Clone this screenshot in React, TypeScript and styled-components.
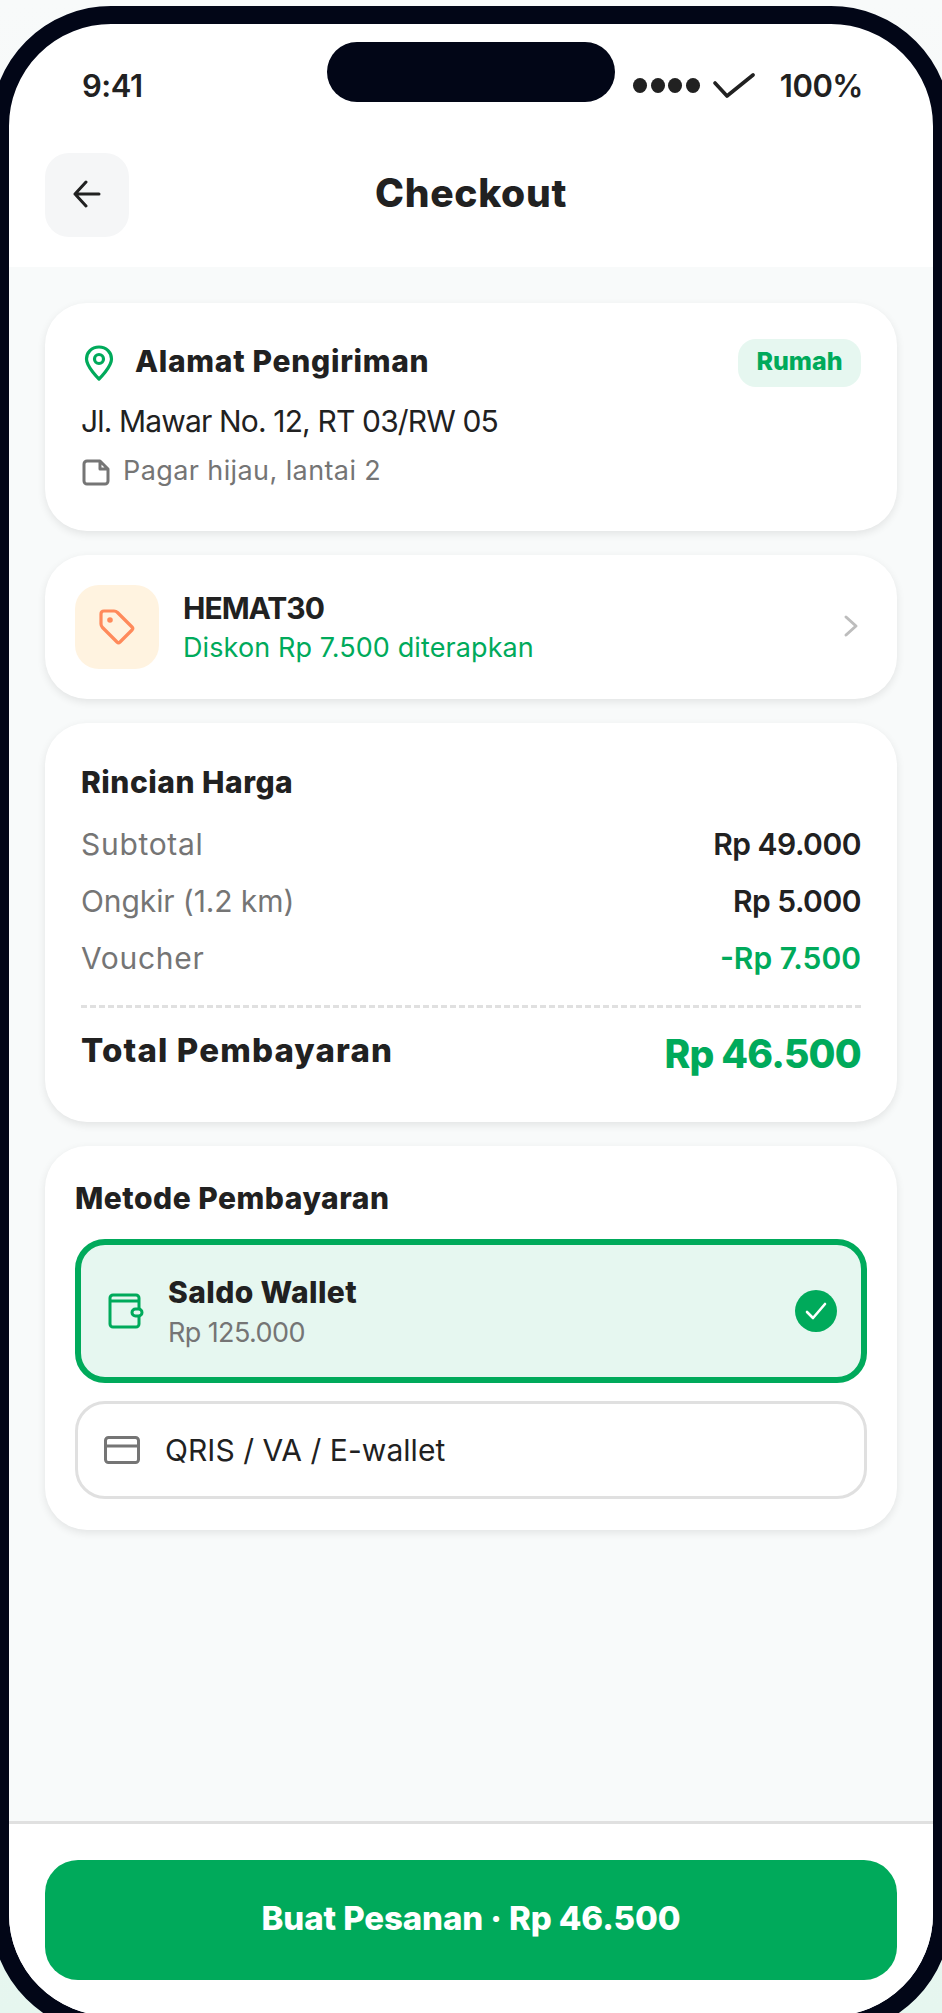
import React from 'react'
import styled, { createGlobalStyle } from 'styled-components'

const GlobalStyle = createGlobalStyle`
    html, body {
        margin: 0;
        height: 2013px;
        overflow: hidden;
        background: linear-gradient(180deg, #f8fafa 0%, #e6f6ef 100%);
    }
    * { box-sizing: border-box; }
`

const green = '#00aa5b'
const tint = '#e6f7f0'
const ink = '#212121'
const grey = '#757575'
const line = '#e0e0e0'

const Phone = styled.div`
    width: 960px;
    height: 2028px;
    margin: 6px 0 0 -9px;
    border: 18px solid #020617;
    border-radius: 120px;
    background: #fff;
    overflow: hidden;
    display: flex;
    flex-direction: column;
    position: relative;
    font-family: Inter, "Liberation Sans", sans-serif;
    color: ${ink};
`

const Island = styled.div`
    position: absolute;
    top: 18px;
    left: 318px;
    width: 288px;
    height: 60px;
    border-radius: 30px;
    background: #020617;
`

const StatusBar = styled.div`
    height: 99px;
    padding: 24px 70px 0 73px;
    display: flex;
    align-items: center;
    justify-content: space-between;
    font-size: 31px;
    font-weight: 600;
    letter-spacing: -0.5px;
`

const StatusRight = styled.div`
    display: flex;
    align-items: center;
`

const Dots = styled.div`
    display: flex;
    gap: 3.5px;
    margin-right: 13px;
`

const Dot = styled.span`
    width: 14px;
    height: 15px;
    border-radius: 50%;
    background: ${ink};
`

const Battery = styled.span`
    margin-left: 25px;
`

const Header = styled.header`
    height: 144px;
    padding: 30px 36px;
    display: grid;
    grid-template-columns: 84px 1fr 84px;
    align-items: center;
`

const BackButton = styled.button`
    width: 84px;
    height: 84px;
    border: 0;
    padding: 0 0 2px;
    border-radius: 24px;
    background: #f5f6f7;
    display: flex;
    align-items: center;
    justify-content: center;
`

const Title = styled.h1`
    margin: 0 0 5px;
    text-align: center;
    font-size: 39px;
    font-weight: 800;
    letter-spacing: 0.7px;
`

const Main = styled.main`
    flex: 1;
    background: #f8fafa;
    padding: 36px 36px 0;
    display: flex;
    flex-direction: column;
    gap: 24px;
`

const Card = styled.section<{ $pad: number }>`
    background: #fff;
    border-radius: 42px;
    padding: ${p => p.$pad}px;
    box-shadow: 0 3px 9px rgba(0, 0, 0, 0.09);
`

const AddressCard = styled(Card)`
    height: 228px;
    padding-top: 36px;
`

const AddressTop = styled.div`
    display: flex;
    align-items: center;
    height: 48px;
`

const CardTitle = styled.h2`
    margin: 0;
    font-size: 30px;
    font-weight: 800;
    letter-spacing: 0.5px;
`

const AddressTitle = styled(CardTitle)`
    flex: 1;
    margin: 0 0 5px 18px;
    letter-spacing: 0.7px;
`

const Badge = styled.span`
    width: 123px;
    height: 48px;
    padding-bottom: 4px;
    border-radius: 18px;
    background: ${tint};
    color: ${green};
    font-size: 25px;
    font-weight: 800;
    display: flex;
    align-items: center;
    justify-content: center;
`

const AddressLine = styled.div`
    margin-top: 13px;
    font-size: 30px;
    line-height: 42px;
    letter-spacing: -0.85px;
`

const NoteLine = styled.div`
    margin-top: 9px;
    display: flex;
    align-items: center;
    gap: 13px;
    font-size: 27px;
    line-height: 39px;
    letter-spacing: 0.4px;
    color: ${grey};
`

const NoteIcon = styled.svg`
    margin: 4px 0 0 1px;
`

const VoucherCard = styled(Card)`
    height: 144px;
    display: flex;
    align-items: center;
    gap: 24px;
`

const IconTile = styled.div`
    width: 84px;
    height: 84px;
    border-radius: 24px;
    background: #fff3e0;
    display: flex;
    align-items: center;
    justify-content: center;
`

const VoucherText = styled.div`
    flex: 1;
`

const VoucherCode = styled.div`
    font-size: 30px;
    line-height: 40px;
    font-weight: 700;
    letter-spacing: -1px;
`

const VoucherNote = styled.div`
    font-size: 27px;
    line-height: 39px;
    color: ${green};
    letter-spacing: 0.1px;
`

const Chevron = styled.svg`
    margin: 0 7px 2px 0;
`

const PriceCard = styled(Card)`
    height: 399px;
    padding-top: 41px;
`

const PriceRow = styled.div`
    display: flex;
    justify-content: space-between;
    align-items: center;
    height: 57px;
`

const PriceList = styled.div`
    margin-top: 15px;
`

const PriceLabel = styled.span<{ $spacing: number }>`
    font-size: 30px;
    color: ${grey};
    letter-spacing: ${p => p.$spacing}px;
`

const PriceValue = styled.span<{ $green?: boolean }>`
    font-size: 30px;
    font-weight: 600;
    letter-spacing: ${p => (p.$green ? 0 : -0.5)}px;
    color: ${p => (p.$green ? green : ink)};
`

const Divider = styled.div`
    margin-top: 19px;
    border-top: 3px dashed ${line};
`

const TotalRow = styled.div`
    margin-top: 18px;
    display: flex;
    justify-content: space-between;
    align-items: flex-start;
`

const TotalLabel = styled.span`
    font-size: 33px;
    line-height: 48px;
    font-weight: 800;
    letter-spacing: 1.15px;
`

const TotalValue = styled.span`
    font-size: 39px;
    line-height: 56px;
    font-weight: 800;
    letter-spacing: -0.8px;
    color: ${green};
`

const PaymentCard = styled(Card)`
    height: 384px;
`

const PaymentTitle = styled(CardTitle)`
    line-height: 44px;
    margin-bottom: 19px;
`

const SelectedOption = styled.div`
    height: 144px;
    border: 6px solid ${green};
    border-radius: 30px;
    background: ${tint};
    padding: 0 24px 0 27px;
    display: flex;
    align-items: center;
    gap: 24px;
`

const OptionText = styled.div`
    flex: 1;
`

const OptionName = styled.div`
    font-size: 30px;
    line-height: 42px;
    font-weight: 800;
    letter-spacing: 0.4px;
`

const OptionNote = styled.div`
    font-size: 27px;
    line-height: 39px;
    letter-spacing: -0.6px;
    color: ${grey};
`

const CheckCircle = styled.div`
    width: 42px;
    height: 42px;
    border-radius: 50%;
    background: ${green};
    display: flex;
    align-items: center;
    justify-content: center;
`

const PlainOption = styled.div`
    margin-top: 18px;
    height: 98px;
    border: 3px solid ${line};
    border-radius: 30px;
    padding: 0 26px;
    display: flex;
    align-items: center;
    gap: 25px;
    font-size: 30px;
    letter-spacing: 0.05px;
`

const Footer = styled.footer`
    border-top: 3px solid ${line};
    padding: 36px;
    background: #fff;
`

const PayButton = styled.button`
    width: 100%;
    height: 120px;
    border: 0;
    padding: 0 0 5px;
    border-radius: 33px;
    background: ${green};
    color: #fff;
    font-family: inherit;
    font-size: 33px;
    font-weight: 800;
    letter-spacing: -0.1px;
`

export default function App() {
    return <>
        <GlobalStyle />
        <Phone>
            <Island />
            <StatusBar>
                <span>9:41</span>
                <StatusRight>
                    <Dots><Dot /><Dot /><Dot /><Dot /></Dots>
                    <svg width="42" height="27" viewBox="0 0 42 27" fill="none" stroke={ink} strokeWidth="3.6" strokeLinecap="round" strokeLinejoin="round">
                        <path d="M2 11 L14 24 L40 3" />
                    </svg>
                    <Battery>100%</Battery>
                </StatusRight>
            </StatusBar>
            <Header>
                <BackButton>
                    <svg width="30" height="28" viewBox="0 0 30 28" fill="none" stroke={ink} strokeWidth="3" strokeLinecap="round" strokeLinejoin="round">
                        <path d="M27 14 H3 M14 2 L3 14 L14 26" />
                    </svg>
                </BackButton>
                <Title>Checkout</Title>
            </Header>
            <Main>
                <AddressCard $pad={36}>
                    <AddressTop>
                        <svg width="36" height="36" viewBox="0 0 36 36" fill="none" stroke={green} strokeWidth="3.2" strokeLinejoin="round">
                            <path d="M18 2 C10.5 2 5.5 7.5 5.5 14 C5.5 22 18 34 18 34 C18 34 30.5 22 30.5 14 C30.5 7.5 25.5 2 18 2 Z" />
                            <circle cx="18" cy="14" r="4.5" />
                        </svg>
                        <AddressTitle>Alamat Pengiriman</AddressTitle>
                        <Badge>Rumah</Badge>
                    </AddressTop>
                    <AddressLine>Jl. Mawar No. 12, RT 03/RW 05</AddressLine>
                    <NoteLine>
                        <NoteIcon width="28" height="27" viewBox="0 0 28 27" fill="none" stroke={grey} strokeWidth="3" strokeLinejoin="round">
                            <path d="M5 2 H18 L26 10 V22 A3 3 0 0 1 23 25 H5 A3 3 0 0 1 2 22 V5 A3 3 0 0 1 5 2 Z M18 2 V10 H26" />
                        </NoteIcon>
                        <span>Pagar hijau, lantai 2</span>
                    </NoteLine>
                </AddressCard>
                <VoucherCard $pad={30}>
                    <IconTile>
                        <svg width="36" height="36" viewBox="0 0 36 36" fill="none" stroke="#ff8a5b" strokeWidth="3.2" strokeLinejoin="round">
                            <path d="M5 2 H15 Q17 2 18.5 3.5 L33 18 Q34.5 19.5 33 21 L21 33 Q19.5 34.5 18 33 L3.5 18.5 Q2 17 2 15 V5 Q2 2 5 2 Z" />
                            <circle cx="11" cy="11" r="1.2" fill="#ff8a5b" />
                        </svg>
                    </IconTile>
                    <VoucherText>
                        <VoucherCode>HEMAT30</VoucherCode>
                        <VoucherNote>Diskon Rp 7.500 diterapkan</VoucherNote>
                    </VoucherText>
                    <Chevron width="18" height="24" viewBox="0 0 18 24" fill="none" stroke="#bdbdbd" strokeWidth="3" strokeLinecap="round" strokeLinejoin="round">
                        <path d="M4 3 L14 12 L4 21" />
                    </Chevron>
                </VoucherCard>
                <PriceCard $pad={36}>
                    <CardTitle>Rincian Harga</CardTitle>
                    <PriceList>
                        <PriceRow><PriceLabel $spacing={0.7}>Subtotal</PriceLabel><PriceValue>Rp 49.000</PriceValue></PriceRow>
                        <PriceRow><PriceLabel $spacing={-0.1}>Ongkir (1.2 km)</PriceLabel><PriceValue>Rp 5.000</PriceValue></PriceRow>
                        <PriceRow><PriceLabel $spacing={0.7}>Voucher</PriceLabel><PriceValue $green>-Rp 7.500</PriceValue></PriceRow>
                    </PriceList>
                    <Divider />
                    <TotalRow>
                        <TotalLabel>Total Pembayaran</TotalLabel>
                        <TotalValue>Rp 46.500</TotalValue>
                    </TotalRow>
                </PriceCard>
                <PaymentCard $pad={30}>
                    <PaymentTitle>Metode Pembayaran</PaymentTitle>
                    <SelectedOption>
                        <svg width="36" height="36" viewBox="0 0 36 36" fill="none" stroke={green} strokeWidth="3" strokeLinejoin="round">
                            <path d="M5 2 H28 A3 3 0 0 1 31 5 V31 A3 3 0 0 1 28 34 H5 A3 3 0 0 1 2 31 V5 A3 3 0 0 1 5 2 Z M2 8 H31" />
                            <rect x="24" y="16" width="10" height="7" rx="3.5" fill={tint} />
                        </svg>
                        <OptionText>
                            <OptionName>Saldo Wallet</OptionName>
                            <OptionNote>Rp 125.000</OptionNote>
                        </OptionText>
                        <CheckCircle>
                            <svg width="24" height="24" viewBox="0 0 24 24" fill="none" stroke="#fff" strokeWidth="2.6" strokeLinecap="round" strokeLinejoin="round">
                                <path d="M3 13 L9 19 L21 5" />
                            </svg>
                        </CheckCircle>
                    </SelectedOption>
                    <PlainOption>
                        <svg width="36" height="28" viewBox="0 0 36 28" fill="none" stroke={grey} strokeWidth="3" strokeLinejoin="round">
                            <rect x="1.5" y="1.5" width="33" height="25" rx="3" />
                            <path d="M1.5 10 H34.5" />
                        </svg>
                        <span>QRIS / VA / E-wallet</span>
                    </PlainOption>
                </PaymentCard>
            </Main>
            <Footer>
                <PayButton>Buat Pesanan · Rp 46.500</PayButton>
            </Footer>
        </Phone>
    </>
}
